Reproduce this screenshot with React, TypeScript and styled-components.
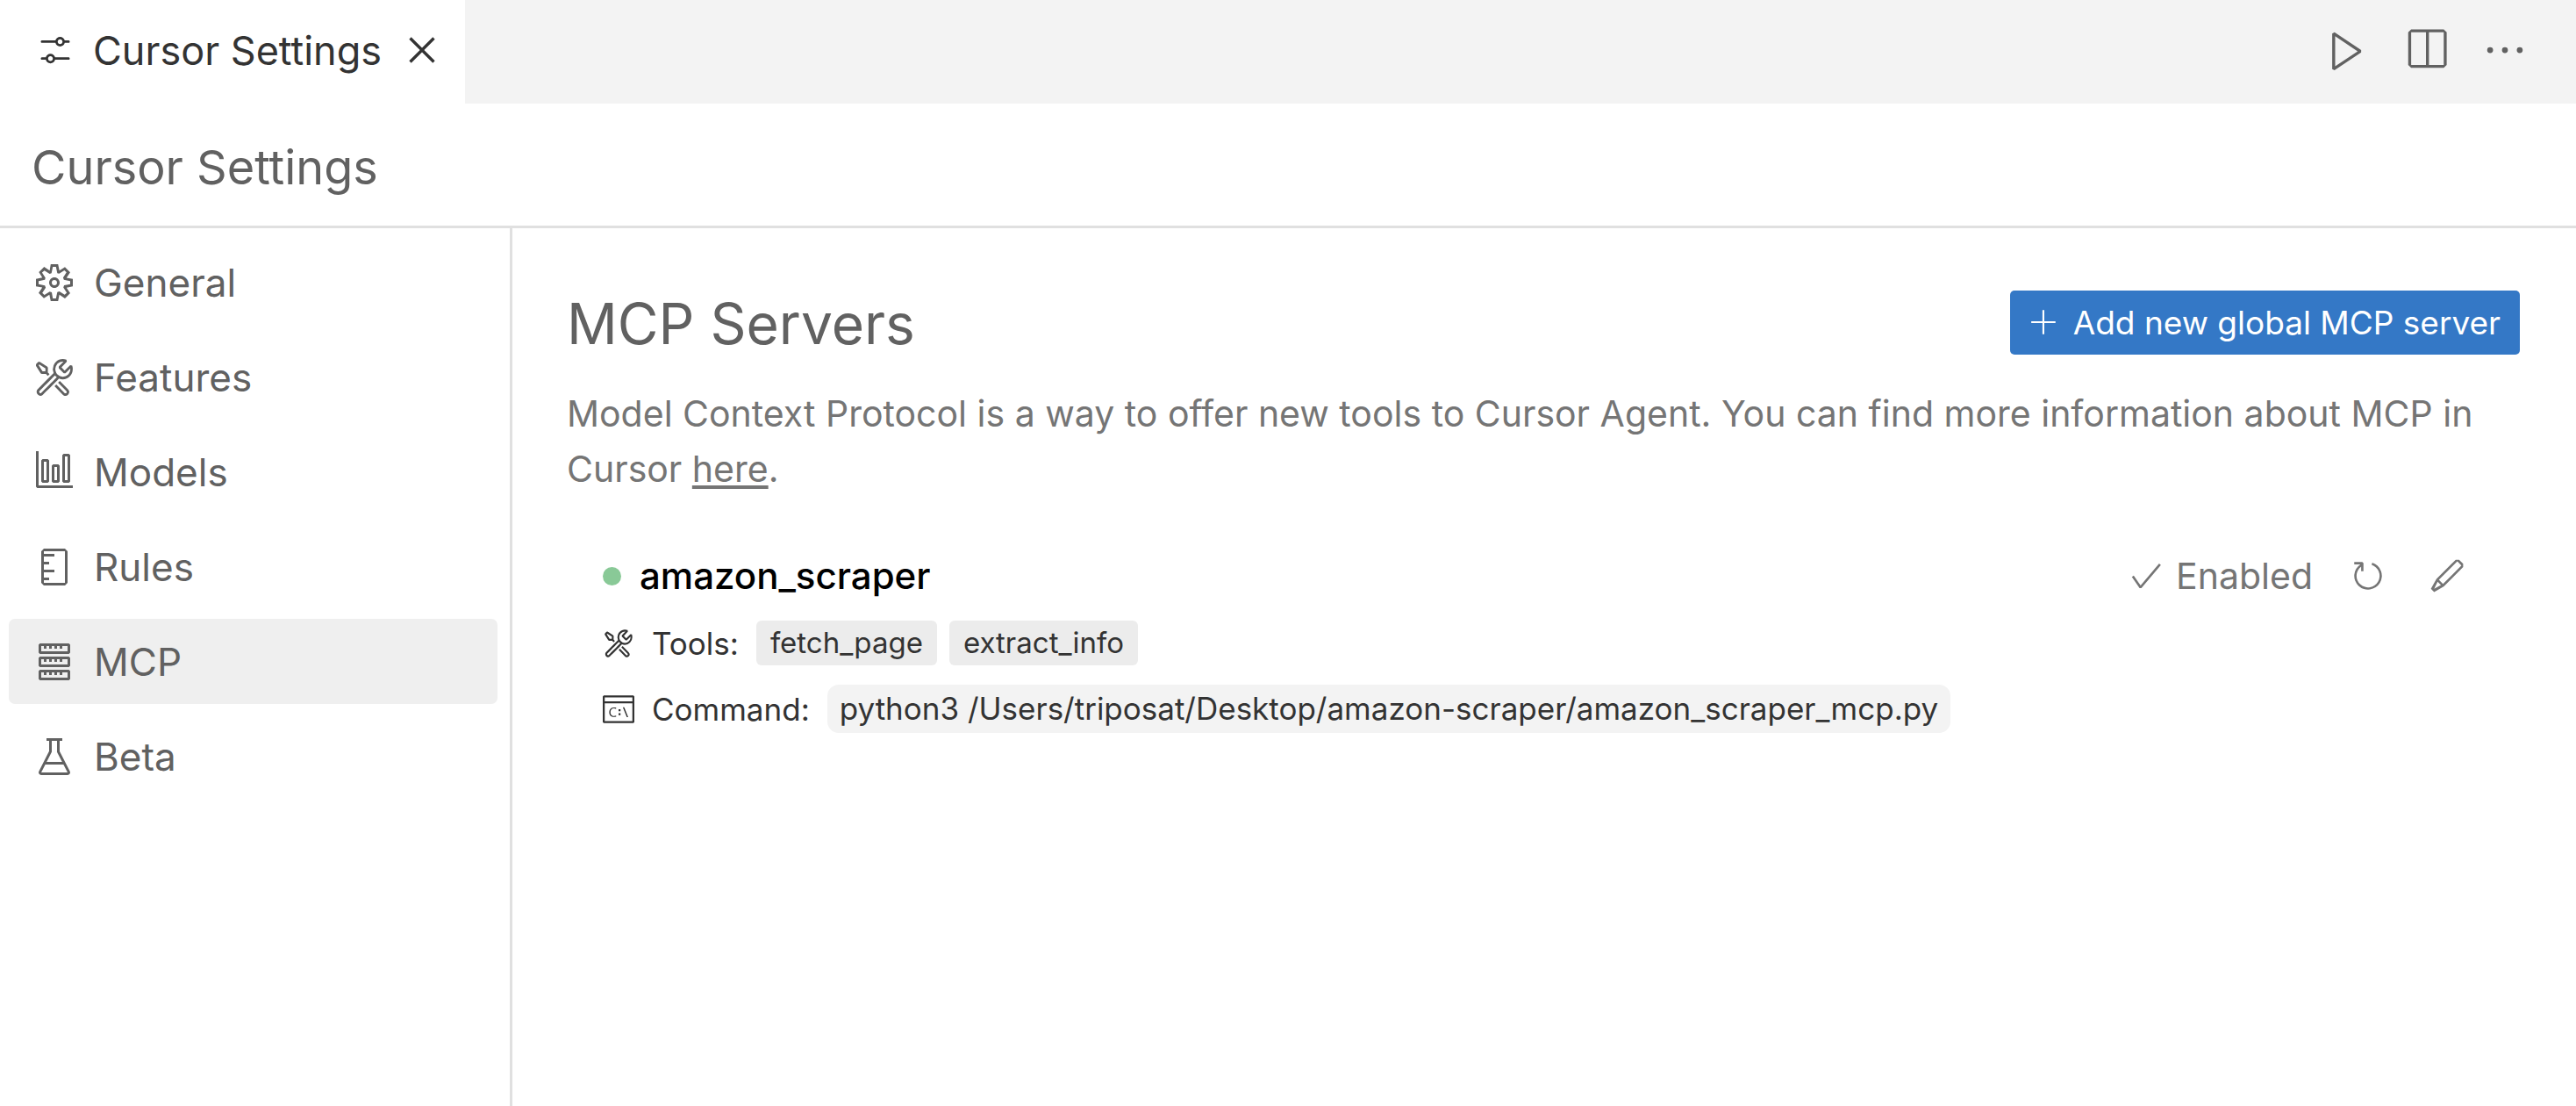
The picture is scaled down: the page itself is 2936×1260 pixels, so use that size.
import React from "react";
import styled, { createGlobalStyle } from "styled-components";
import type { IconType } from "react-icons";
import {
  VscAdd,
  VscBeaker,
  VscCheck,
  VscClose,
  VscEdit,
  VscEllipsis,
  VscGear,
  VscGraph,
  VscPlay,
  VscRefresh,
  VscServer,
  VscSettings,
  VscSplitHorizontal,
  VscSymbolRuler,
  VscTerminalCmd,
  VscTools,
} from "react-icons/vsc";

const color = {
  text: "#333333",
  muted: "#616161",
  faint: "#757575",
  line: "#e0e0e0",
  bar: "#f3f3f3",
  selected: "#efefef",
  chip: "#ececec",
  code: "#f3f3f3",
  accent: "#3478c6",
  online: "#89c997",
};

const GlobalStyle = createGlobalStyle`
  * {
    box-sizing: border-box;
  }
  body {
    margin: 0;
    background: #ffffff;
    color: ${color.muted};
    font-family: Inter, "Liberation Sans", sans-serif;
    font-size: 44px;
  }
  button {
    margin: 0;
    padding: 0;
    border: 0;
    background: none;
    color: inherit;
    font: inherit;
    cursor: pointer;
  }
  svg {
    display: block;
    flex: none;
  }
`;

const Shell = styled.div`
  display: flex;
  flex-direction: column;
  min-height: 100vh;
`;

const TabBar = styled.div`
  display: flex;
  justify-content: space-between;
  height: 118px;
  background: ${color.bar};
`;

const Tab = styled.div`
  display: flex;
  align-items: center;
  padding: 0 22px 4px 41px;
  background: #ffffff;
  color: ${color.text};
  font-size: 45px;
`;

const TabLabel = styled.span`
  margin: 0 19px 0 21px;
  white-space: nowrap;
`;

const IconButton = styled.button`
  display: flex;
  align-items: center;
  justify-content: center;
`;

const TabActions = styled.div`
  display: flex;
  align-items: center;
  gap: 36px;
  padding: 0 54px 4px 0;
`;

const Header = styled.header`
  padding: 41px 36px 34px;
  border-bottom: 3px solid ${color.line};
`;

const PageTitle = styled.h1`
  margin: 0;
  font-size: 54px;
  font-weight: 400;
  line-height: 64px;
`;

const Body = styled.div`
  display: flex;
  flex: 1;
`;

const Sidebar = styled.nav`
  display: flex;
  flex: none;
  flex-direction: column;
  gap: 11px;
  width: 584px;
  padding: 13px 14px 13px 10px;
  border-right: 3px solid ${color.line};
`;

const NavItem = styled.button<{ $active: boolean }>`
  display: flex;
  align-items: center;
  gap: 21px;
  height: 97px;
  padding: 0 28px;
  border-radius: 7px;
  background: ${(p) => (p.$active ? color.selected : "transparent")};
`;

const Main = styled.main`
  flex: 1;
  min-width: 0;
  padding: 71px 64px 64px 62px;
`;

const SectionHead = styled.div`
  display: flex;
  align-items: flex-start;
  justify-content: space-between;
`;

const SectionTitle = styled.h2`
  margin: 0;
  font-size: 64px;
  font-weight: 400;
  line-height: 76px;
`;

const PrimaryButton = styled.button`
  display: flex;
  align-items: center;
  gap: 16px;
  height: 73px;
  padding: 0 22px;
  border-radius: 5px;
  background: ${color.accent};
  color: #ffffff;
  font-size: 37px;
  white-space: nowrap;
`;

const Description = styled.p`
  margin: 33px 0 65px;
  color: ${color.faint};
  font-size: 41px;
  line-height: 63px;
`;

const DocLink = styled.a`
  color: inherit;
  text-decoration: underline;
  text-decoration-thickness: 4px;
  text-underline-offset: 4px;
`;

const ServerCard = styled.article`
  display: flex;
  flex-direction: column;
  padding: 0 62px 0 41px;
`;

const ServerHead = styled.div`
  display: flex;
  align-items: center;
  justify-content: space-between;
  margin-bottom: 26px;
  font-size: 41px;
  line-height: 50px;
`;

const ServerIdentity = styled.div`
  display: flex;
  align-items: center;
  gap: 21px;
`;

const StatusDot = styled.span`
  width: 21px;
  height: 21px;
  border-radius: 50%;
  background: ${color.online};
`;

const ServerName = styled.h3`
  margin: 0;
  color: #000000;
  font-size: 42px;
  font-weight: 500;
`;

const ServerActions = styled.div`
  display: flex;
  align-items: center;
  gap: 48px;
  color: ${color.faint};
`;

const StatusGroup = styled.div`
  display: flex;
  align-items: center;
  gap: 42px;
`;

const StatusToggle = styled.button`
  display: flex;
  align-items: center;
  gap: 13px;
`;

const DetailRow = styled.div`
  display: flex;
  align-items: center;
  gap: 20px;
  color: ${color.text};
  font-size: 35px;

  & + & {
    margin-top: 22px;
  }
`;

const ChipList = styled.ul`
  display: flex;
  gap: 14px;
  margin: 0;
  padding: 0;
  list-style: none;
`;

const Chip = styled.li`
  padding: 0 16px;
  border-radius: 6px;
  background: ${color.chip};
  font-size: 33px;
  line-height: 51px;
`;

const CommandText = styled.code`
  padding: 0 14px;
  border-radius: 13px;
  background: ${color.code};
  font-family: inherit;
  line-height: 55px;
`;

const sections: { label: string; icon: IconType }[] = [
  { label: "General", icon: VscGear },
  { label: "Features", icon: VscTools },
  { label: "Models", icon: VscGraph },
  { label: "Rules", icon: VscSymbolRuler },
  { label: "MCP", icon: VscServer },
  { label: "Beta", icon: VscBeaker },
];

const editorActions: { label: string; icon: IconType }[] = [
  { label: "Run", icon: VscPlay },
  { label: "Split editor", icon: VscSplitHorizontal },
  { label: "More actions", icon: VscEllipsis },
];

const server = {
  name: "amazon_scraper",
  tools: ["fetch_page", "extract_info"],
  command: "python3 /Users/triposat/Desktop/amazon-scraper/amazon_scraper_mcp.py",
};

export default function App() {
  const [active, setActive] = React.useState("MCP");

  return (
    <Shell>
      <GlobalStyle />
      <TabBar>
        <Tab>
          <VscSettings size={44} />
          <TabLabel>Cursor Settings</TabLabel>
          <IconButton aria-label="Close tab">
            <VscClose size={54} />
          </IconButton>
        </Tab>
        <TabActions>
          {editorActions.map(({ label, icon: Icon }) => (
            <IconButton key={label} aria-label={label}>
              <Icon size={54} color={color.muted} />
            </IconButton>
          ))}
        </TabActions>
      </TabBar>
      <Header>
        <PageTitle>Cursor Settings</PageTitle>
      </Header>
      <Body>
        <Sidebar aria-label="Settings sections">
          {sections.map(({ label, icon: Icon }) => (
            <NavItem
              key={label}
              $active={label === active}
              aria-current={label === active ? "page" : undefined}
              onClick={() => setActive(label)}
            >
              <Icon size={48} />
              {label}
            </NavItem>
          ))}
        </Sidebar>
        <Main>
          <SectionHead>
            <SectionTitle>MCP Servers</SectionTitle>
            <PrimaryButton>
              <VscAdd size={34} />
              Add new global MCP server
            </PrimaryButton>
          </SectionHead>
          <Description>
            Model Context Protocol is a way to offer new tools to Cursor Agent. You can find more
            information about MCP in Cursor <DocLink href="#mcp-docs">here</DocLink>.
          </Description>
          <ServerCard>
            <ServerHead>
              <ServerIdentity>
                <StatusDot />
                <ServerName>{server.name}</ServerName>
              </ServerIdentity>
              <ServerActions>
                <StatusGroup>
                  <StatusToggle aria-pressed="true">
                    <VscCheck size={42} />
                    Enabled
                  </StatusToggle>
                  <IconButton aria-label="Refresh server">
                    <VscRefresh size={42} />
                  </IconButton>
                </StatusGroup>
                <IconButton aria-label="Edit server">
                  <VscEdit size={42} />
                </IconButton>
              </ServerActions>
            </ServerHead>
            <DetailRow>
              <VscTools size={36} />
              <span>Tools:</span>
              <ChipList>
                {server.tools.map((tool) => (
                  <Chip key={tool}>{tool}</Chip>
                ))}
              </ChipList>
            </DetailRow>
            <DetailRow>
              <VscTerminalCmd size={36} />
              <span>Command:</span>
              <CommandText>{server.command}</CommandText>
            </DetailRow>
          </ServerCard>
        </Main>
      </Body>
    </Shell>
  );
}
